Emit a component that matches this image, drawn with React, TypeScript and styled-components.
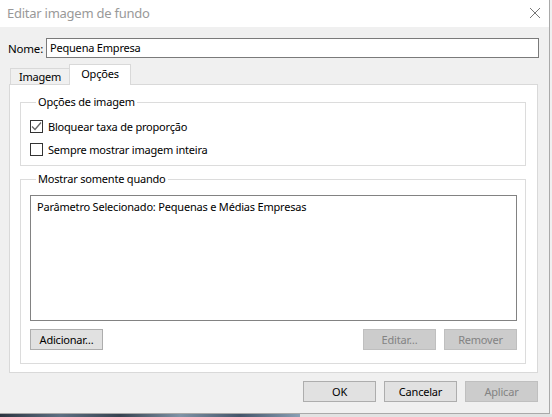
import React from 'react';
import styled, { createGlobalStyle } from 'styled-components';

const Global = createGlobalStyle`
  html, body { margin: 0; padding: 0; background: #f0f0f0; }
  body { font-family: "Noto Sans", "Open Sans", sans-serif; font-size: 11px; letter-spacing: -0.2px; color: #000; }
  * { box-sizing: border-box; }
`;

const Screen = styled.div`
  width: 552px;
  height: 417px;
  overflow: hidden;
  display: flex;
  flex-direction: column;
  background: #f0f0f0;
`;

const Dialog = styled.div`
  width: 550px;
  height: 414px;
  border-right: 1px solid #a9a9a9;
  border-bottom: 1px solid #a9a9a9;
  display: flex;
  flex-direction: column;
  background: #f0f0f0;
`;

const TitleBar = styled.div`
  height: 27px;
  background: #fff;
  display: flex;
  align-items: center;
  justify-content: space-between;
  padding: 0 8px 0 7px;
`;

const Title = styled.span`
  font-size: 13px;
  color: #999;
  letter-spacing: -0.25px;
  margin-top: -1px;
`;

const Close = styled.svg`
  width: 12px;
  height: 12px;
  margin-bottom: 2px;
`;

const Body = styled.div`
  flex: 1;
  display: flex;
  flex-direction: column;
  padding: 11px 0 0 8px;
`;

const NameRow = styled.div`
  display: flex;
  align-items: center;
  height: 20px;
`;

const NameLabel = styled.label`
  width: 38px;
  font-size: 11.5px;
`;

const NameInput = styled.div`
  width: 493px;
  height: 20px;
  border: 1px solid #7a7a7a;
  background: #fff;
  padding: 0 3px;
  line-height: 18px;
`;

const TabStrip = styled.div`
  display: flex;
  align-items: flex-end;
  height: 20px;
  margin-top: 6px;
  padding-left: 2px;
  position: relative;
  z-index: 1;
`;

const Tab = styled.div<{ $active?: boolean }>`
  display: flex;
  justify-content: center;
  align-items: center;
  border: 1px solid #d9d9d9;
  border-bottom: none;
  background: ${p => (p.$active ? '#fff' : '#f0f0f0')};
  width: ${p => (p.$active ? 62 : 60)}px;
  height: ${p => (p.$active ? 21 : 16)}px;
  margin-bottom: ${p => (p.$active ? -1 : 0)}px;
  margin-left: ${p => (p.$active ? -1 : 0)}px;
  padding-bottom: ${p => (p.$active ? 3 : 0)}px;
`;

const Panel = styled.div`
  margin-left: 1px;
  width: 529px;
  height: 289px;
  background: #fff;
  border: 1px solid #d9d9d9;
  padding: 10px 10px 0 10px;
  display: flex;
  flex-direction: column;
  gap: 6px;
`;

const Group = styled.fieldset`
  margin: 0;
  width: 506px;
  border: 1px solid #dcdcdc;
  padding: 6px 8px 4px 9px;
  min-width: 0;
`;

const Legend = styled.legend`
  margin-left: 6px;
  padding: 0 2px;
  line-height: 14px;
  height: 14px;
`;

const CheckRow = styled.div`
  height: 23px;
  display: flex;
  align-items: center;
  gap: 5px;
`;

const Box = styled.span`
  width: 13px;
  height: 13px;
  border: 1px solid #333;
  background: #fff;
  display: flex;
  align-items: center;
  justify-content: center;
`;

const ListBox = styled.div`
  height: 126px;
  border: 1px solid #828282;
  background: #fff;
  padding: 3px 6px;
  line-height: 16px;
  margin-top: 3px;
`;

const ButtonRow = styled.div`
  display: flex;
  gap: 8px;
  margin-top: 8px;
  margin-bottom: 9px;
`;

const Spacer = styled.div`
  flex: 1;
`;

const Button = styled.div<{ $disabled?: boolean }>`
  width: 73px;
  height: 21px;
  display: flex;
  align-items: center;
  justify-content: center;
  background: ${p => (p.$disabled ? '#cccccc' : '#e1e1e1')};
  border: 1px solid ${p => (p.$disabled ? '#bfbfbf' : '#adadad')};
  color: ${p => (p.$disabled ? '#838383' : '#000')};
  padding-bottom: 1px;
`;

const Footer = styled.div`
  display: flex;
  justify-content: flex-end;
  gap: 8px;
  margin-top: 8px;
  padding-right: 11px;
`;

const Desktop = styled.div`
  height: 3px;
  display: flex;
`;

const DesktopImage = styled.div`
  width: 300px;
  background: linear-gradient(90deg, #2b3440 0%, #5d6f82 20%, #364250 40%, #7f93a6 60%, #44556a 80%, #8aa0b5 100%);
`;

const DesktopRest = styled.div`
  flex: 1;
  background: #e2e2e2;
`;

const Check = () => (
  <svg width="11" height="11" viewBox="0 0 11 11">
    <path d="M1 5.5 L4 8.5 L10 1.5" fill="none" stroke="#666" strokeWidth="1.3" />
  </svg>
);

export default function App() {
  return (
    <Screen>
      <Global />
      <Dialog>
        <TitleBar>
          <Title>Editar imagem de fundo</Title>
          <Close viewBox="0 0 12 12">
            <path d="M1 1 L11 11 M11 1 L1 11" stroke="#777" strokeWidth="1" />
          </Close>
        </TitleBar>
        <Body>
          <NameRow>
            <NameLabel>Nome:</NameLabel>
            <NameInput>Pequena Empresa</NameInput>
          </NameRow>
          <TabStrip>
            <Tab>Imagem</Tab>
            <Tab $active>Opções</Tab>
          </TabStrip>
          <Panel>
            <Group>
              <Legend>Opções de imagem</Legend>
              <CheckRow>
                <Box><Check /></Box>
                Bloquear taxa de proporção
              </CheckRow>
              <CheckRow>
                <Box />
                Sempre mostrar imagem inteira
              </CheckRow>
            </Group>
            <Group>
              <Legend>Mostrar somente quando</Legend>
              <ListBox>Parâmetro Selecionado: Pequenas e Médias Empresas</ListBox>
              <ButtonRow>
                <Button>Adicionar…</Button>
                <Spacer />
                <Button $disabled>Editar…</Button>
                <Button $disabled>Remover</Button>
              </ButtonRow>
            </Group>
          </Panel>
          <Footer>
            <Button>OK</Button>
            <Button>Cancelar</Button>
            <Button $disabled>Aplicar</Button>
          </Footer>
        </Body>
      </Dialog>
      <Desktop>
        <DesktopImage />
        <DesktopRest />
      </Desktop>
    </Screen>
  );
}
